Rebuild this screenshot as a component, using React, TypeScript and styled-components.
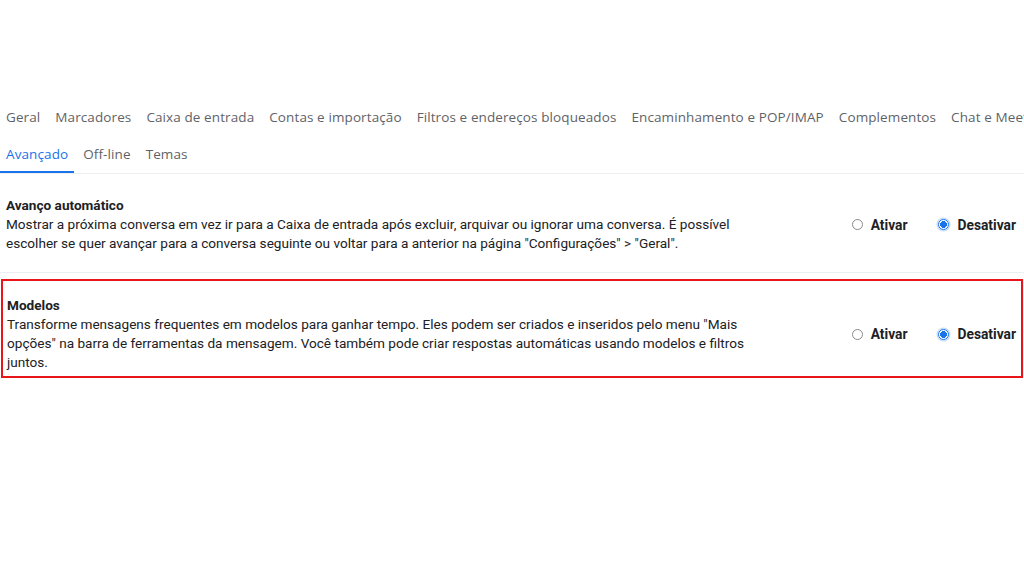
import React from "react";
import styled, { createGlobalStyle } from "styled-components";

const Global = createGlobalStyle`
  html, body {
    margin: 0;
    padding: 0;
    background: #ffffff;
    overflow: hidden;
  }
  body {
    width: 1024px;
    height: 576px;
    font-family: Roboto, "Liberation Sans", Arial, sans-serif;
    color: #202124;
  }
`;

const Page = styled.div`
  width: 1024px;
  height: 576px;
  padding-top: 99px;
  box-sizing: border-box;
  overflow: hidden;
`;

const TabBar = styled.nav`
  display: flex;
  flex-direction: column;
  border-bottom: 1px solid #eceff1;
`;

const TabRow = styled.div`
  display: flex;
  gap: 3px;
  white-space: nowrap;
`;

const Tab = styled.a<{ $active?: boolean }>`
  display: flex;
  align-items: center;
  height: 37px;
  padding: 0 6px;
  box-sizing: border-box;
  font-family: "Open Sans", Roboto, sans-serif;
  font-size: 13.5px;
  letter-spacing: 0.1px;
  color: ${(p) => (p.$active ? "#1a73e8" : "#5f6368")};
  border-bottom: 2px solid ${(p) => (p.$active ? "#1a73e8" : "transparent")};
  margin-bottom: ${(p) => (p.$active ? "-1px" : "0")};
  cursor: pointer;
`;

const Setting = styled.section`
  display: flex;
  align-items: center;
  padding: 22px 0 19px 6px;
  border-bottom: 1px solid #eceff1;
`;

const Highlight = styled.div`
  margin: 6px 1px 0 1px;
  border: 2px solid #e8151b;
`;

const HighlightedSetting = styled.section`
  display: flex;
  align-items: center;
  padding: 15px 0 4px 4px;
`;

const Info = styled.div`
  width: 770px;
  flex: none;
  font-size: 13.6px;
  line-height: 19px;
`;

const Title = styled.div`
  font-weight: 700;
`;

const Description = styled.div`
  color: #202124;
`;

const Options = styled.div<{ $inset: number }>`
  display: flex;
  align-items: center;
  margin-left: auto;
  gap: 31px;
  padding-right: ${(p) => p.$inset}px;
  white-space: nowrap;
`;

const Option = styled.label`
  display: flex;
  align-items: center;
  gap: 8px;
  font-family: Roboto, "Liberation Sans", sans-serif;
  font-size: 13.8px;
  font-weight: 700;
  color: #202124;
`;

const Radio = styled.span<{ $checked?: boolean }>`
  width: 11px;
  height: 11px;
  box-sizing: border-box;
  border-radius: 50%;
  border: 1px solid ${(p) => (p.$checked ? "#1a73e8" : "#8a8a8a")};
  background: ${(p) =>
    p.$checked
      ? "radial-gradient(circle, #1a73e8 0 3.2px, #ffffff 3.6px)"
      : "#ffffff"};
  box-shadow: ${(p) => (p.$checked ? "0 0 0 1.5px rgba(26,115,232,0.25)" : "none")};
`;

const tabsTop = [
  "Geral",
  "Marcadores",
  "Caixa de entrada",
  "Contas e importação",
  "Filtros e endereços bloqueados",
  "Encaminhamento e POP/IMAP",
  "Complementos",
  "Chat e Meet",
];

const tabsBottom = ["Avançado", "Off-line", "Temas"];

function Toggle({ on, inset }: { on: boolean; inset: number }) {
  return (
    <Options $inset={inset}>
      <Option>
        <Radio $checked={on} />
        Ativar
      </Option>
      <Option>
        <Radio $checked={!on} />
        Desativar
      </Option>
    </Options>
  );
}

export default function App() {
  return (
    <>
      <Global />
      <Page>
        <TabBar>
          <TabRow>
            {tabsTop.map((t) => (
              <Tab key={t}>{t}</Tab>
            ))}
          </TabRow>
          <TabRow>
            {tabsBottom.map((t, i) => (
              <Tab key={t} $active={i === 0}>
                {t}
              </Tab>
            ))}
          </TabRow>
        </TabBar>

        <Setting>
          <Info>
            <Title>Avanço automático</Title>
            <Description>
              Mostrar a próxima conversa em vez ir para a Caixa de entrada após excluir,
              arquivar ou ignorar uma conversa. É possível escolher se quer avançar para a
              conversa seguinte ou voltar para a anterior na página "Configurações" &gt;
              "Geral".
            </Description>
          </Info>
          <Toggle on={false} inset={8} />
        </Setting>

        <Highlight>
          <HighlightedSetting>
            <Info>
              <Title>Modelos</Title>
              <Description>
                Transforme mensagens frequentes em modelos para ganhar tempo. Eles podem ser
                criados e inseridos pelo menu "Mais opções" na barra de ferramentas da
                mensagem. Você também pode criar respostas automáticas usando modelos e
                filtros juntos.
              </Description>
            </Info>
            <Toggle on={false} inset={5} />
          </HighlightedSetting>
        </Highlight>
      </Page>
    </>
  );
}
